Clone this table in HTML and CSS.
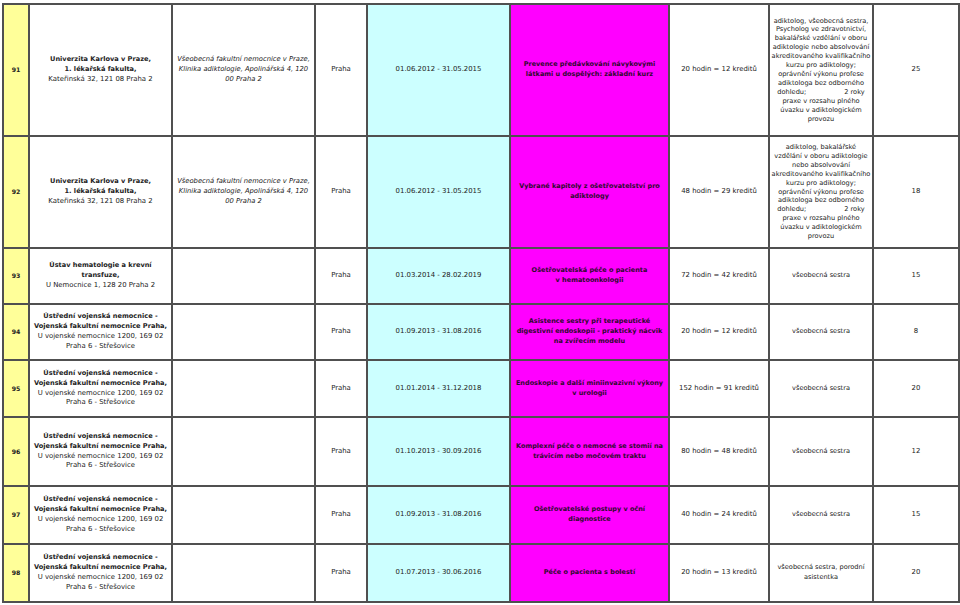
FILE: index.html
```html
<!DOCTYPE html>
<html lang="cs">
<head>
<meta charset="utf-8">
<title>Akreditované vzdělávací programy</title>
<link rel="stylesheet" href="styles.css">
</head>
<body>
<table class="grid">
  <colgroup>
    <col class="c-num"><col class="c-org"><col class="c-site"><col class="c-city"><col class="c-date"><col class="c-name"><col class="c-hours"><col class="c-qual"><col class="c-cap">
  </colgroup>
  <tbody>
    <tr class="r91">
      <td class="num">91</td>
      <td><b>Univerzita Karlova v Praze,<br>1. lékařská fakulta,</b><br>Kateřinská 32, 121 08 Praha 2</td>
      <td class="site">Všeobecná fakultní nemocnice v Praze,<br>Klinika adiktologie, Apolinářská 4, 120<br>00 Praha 2</td>
      <td>Praha</td>
      <td class="date">01.06.2012 - 31.05.2015</td>
      <td class="name">Prevence předávkování návykovými<br>látkami u dospělých: základní kurz</td>
      <td>20 hodin = 12 kreditů</td>
      <td class="qual dense">adiktolog, všeobecná sestra,<br>Psycholog ve zdravotnictví,<br>bakalářské vzdělání v oboru<br>adiktologie nebo absolvování<br>akreditovaného kvalifikačního<br>kurzu pro adiktology;<br>oprávnění výkonu profese<br>adiktologa bez odborného<br>dohledu;<span class="gap"></span>2 roky<br>praxe v rozsahu plného<br>úvazku v adiktologickém<br>provozu</td>
      <td>25</td>
    </tr>
    <tr class="r92">
      <td class="num">92</td>
      <td><b>Univerzita Karlova v Praze,<br>1. lékařská fakulta,</b><br>Kateřinská 32, 121 08 Praha 2</td>
      <td class="site">Všeobecná fakultní nemocnice v Praze,<br>Klinika adiktologie, Apolinářská 4, 120<br>00 Praha 2</td>
      <td>Praha</td>
      <td class="date">01.06.2012 - 31.05.2015</td>
      <td class="name">Vybrané kapitoly z ošetřovatelství pro<br>adiktology</td>
      <td>48 hodin = 29 kreditů</td>
      <td class="qual dense">adiktolog, bakalářské<br>vzdělání v oboru adiktologie<br>nebo absolvování<br>akreditovaného kvalifikačního<br>kurzu pro adiktology;<br>oprávnění výkonu profese<br>adiktologa bez odborného<br>dohledu;<span class="gap"></span>2 roky<br>praxe v rozsahu plného<br>úvazku v adiktologickém<br>provozu</td>
      <td>18</td>
    </tr>
    <tr class="r93">
      <td class="num">93</td>
      <td><b>Ústav hematologie a krevní<br>transfuze,</b><br>U Nemocnice 1, 128 20 Praha 2</td>
      <td class="site"></td>
      <td>Praha</td>
      <td class="date">01.03.2014 - 28.02.2019</td>
      <td class="name">Ošetřovatelská péče o pacienta<br>v hematoonkologii</td>
      <td>72 hodin = 42 kreditů</td>
      <td class="qual">všeobecná sestra</td>
      <td>15</td>
    </tr>
    <tr class="r94">
      <td class="num">94</td>
      <td><b>Ústřední vojenská nemocnice -<br>Vojenská fakultní nemocnice Praha,</b><br>U vojenské nemocnice 1200, 169 02<br>Praha 6 - Střešovice</td>
      <td class="site"></td>
      <td>Praha</td>
      <td class="date">01.09.2013 - 31.08.2016</td>
      <td class="name">Asistence sestry při terapeutické<br>digestivní endoskopii - praktický nácvik<br>na zvířecím modelu</td>
      <td>20 hodin = 12 kreditů</td>
      <td class="qual">všeobecná sestra</td>
      <td>8</td>
    </tr>
    <tr class="r95">
      <td class="num">95</td>
      <td><b>Ústřední vojenská nemocnice -<br>Vojenská fakultní nemocnice Praha,</b><br>U vojenské nemocnice 1200, 169 02<br>Praha 6 - Střešovice</td>
      <td class="site"></td>
      <td>Praha</td>
      <td class="date">01.01.2014 - 31.12.2018</td>
      <td class="name">Endoskopie a další miniinvazivní výkony<br>v urologii</td>
      <td>152 hodin = 91 kreditů</td>
      <td class="qual">všeobecná sestra</td>
      <td>20</td>
    </tr>
    <tr class="r96">
      <td class="num">96</td>
      <td><b>Ústřední vojenská nemocnice -<br>Vojenská fakultní nemocnice Praha,</b><br>U vojenské nemocnice 1200, 169 02<br>Praha 6 - Střešovice</td>
      <td class="site"></td>
      <td>Praha</td>
      <td class="date">01.10.2013 - 30.09.2016</td>
      <td class="name">Komplexní péče o nemocné se stomií na<br>trávicím nebo močovém traktu</td>
      <td>80 hodin = 48 kreditů</td>
      <td class="qual">všeobecná sestra</td>
      <td>12</td>
    </tr>
    <tr class="r97">
      <td class="num">97</td>
      <td><b>Ústřední vojenská nemocnice -<br>Vojenská fakultní nemocnice Praha,</b><br>U vojenské nemocnice 1200, 169 02<br>Praha 6 - Střešovice</td>
      <td class="site"></td>
      <td>Praha</td>
      <td class="date">01.09.2013 - 31.08.2016</td>
      <td class="name">Ošetřovatelské postupy v oční<br>diagnostice</td>
      <td>40 hodin = 24 kreditů</td>
      <td class="qual">všeobecná sestra</td>
      <td>15</td>
    </tr>
    <tr class="r98">
      <td class="num">98</td>
      <td><b>Ústřední vojenská nemocnice -<br>Vojenská fakultní nemocnice Praha,</b><br>U vojenské nemocnice 1200, 169 02<br>Praha 6 - Střešovice</td>
      <td class="site"></td>
      <td>Praha</td>
      <td class="date">01.07.2013 - 30.06.2016</td>
      <td class="name">Péče o pacienta s bolestí</td>
      <td>20 hodin = 13 kreditů</td>
      <td class="qual">všeobecná sestra, porodní<br>asistentka</td>
      <td>20</td>
    </tr>
  </tbody>
</table>
</body>
</html>
```
FILE: styles.css
```css
html, body {
  margin: 0;
  padding: 0;
  background: #ffffff;
}

body {
  padding: 3px 0 0 2px;
  font-family: "DejaVu Sans", Verdana, sans-serif;
  font-size: 6.9px;
  line-height: 9.8px;
  color: #222222;
}

.grid {
  width: 956px;
  table-layout: fixed;
  border-collapse: collapse;
}

.grid td {
  border: 2px solid #505050;
  padding: 0 1px;
  text-align: center;
  vertical-align: middle;
  white-space: nowrap;
  overflow: hidden;
}

.c-num { width: 26px; }
.c-org { width: 143px; }
.c-site { width: 143px; }
.c-city { width: 52px; }
.c-date { width: 143px; }
.c-name { width: 159px; }
.c-hours { width: 100px; }
.c-qual { width: 104px; }
.c-cap { width: 86px; }

.r91 { height: 132px; }
.r92 { height: 112px; }
.r93 { height: 56px; }
.r94 { height: 56px; }
.r95 { height: 57px; }
.r96 { height: 69px; }
.r97 { height: 58px; }
.r98 { height: 58px; }

.grid td.num {
  background: #ffff99;
  font-weight: bold;
  font-size: 6.2px;
}

.grid td b {
  font-weight: bold;
  font-size: 6.6px;
}

.grid td.site {
  font-style: italic;
  font-size: 6.75px;
}

.grid td.date {
  background: #ccffff;
}

.grid td.name {
  background: #ff00ff;
  font-weight: bold;
  font-size: 6.5px;
  color: #2e0a2e;
}

.grid td.qual {
  font-size: 6.6px;
  padding: 0;
}

.grid td.qual.dense {
  line-height: 8.9px;
}

.gap {
  display: inline-block;
  width: 38px;
}
```
